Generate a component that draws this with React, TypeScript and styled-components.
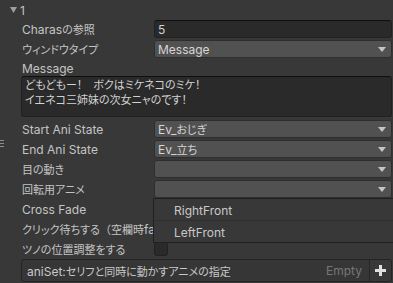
import React from "react";
import styled, { createGlobalStyle } from "styled-components";

const Global = createGlobalStyle`
  html, body { margin: 0; padding: 0; background: #383838; }
  body {
    font-family: Inter, "Noto Sans CJK JP", sans-serif;
    font-size: 12px;
    color: #c4c4c4;
  }
`;

const Page = styled.div`
  position: relative;
  width: 393px;
  height: 283px;
  overflow: hidden;
  background: #383838;
  display: flex;
  flex-direction: column;
`;

const Handle = styled.div`
  position: absolute;
  left: 0;
  top: 140px;
  width: 4px;
  height: 7px;
  display: flex;
  flex-direction: column;
  justify-content: space-between;
  & > i { display: block; height: 1px; background: #8c8c8c; }
`;

const Foldout = styled.div`
  height: 18px;
  margin-top: 1px;
  margin-bottom: -1px;
  display: flex;
  align-items: center;
  gap: 3px;
  padding-left: 10px;
  color: #c4c4c4;
`;

const Body = styled.div`
  margin-top: 2px;
  padding: 0 1px 0 21px;
  display: flex;
  flex-direction: column;
  gap: 2px;
`;

const Row = styled.div<{ $h?: number; $mb?: number }>`
  height: ${(p) => p.$h ?? 18}px;
  margin-bottom: ${(p) => p.$mb ?? 0}px;
  display: flex;
  align-items: center;
`;

const Label = styled.div<{ $full?: boolean }>`
  width: ${(p) => (p.$full ? "auto" : "133px")};
  flex: ${(p) => (p.$full ? 1 : "none")};
  padding-left: 1px;
  box-sizing: border-box;
  white-space: nowrap;
  overflow: hidden;
`;

const IntField = styled.div`
  flex: 1;
  height: 18px;
  box-sizing: border-box;
  background: #2a2a2a;
  border: 1px solid #212121;
  border-top-color: #0f0f0f;
  border-radius: 3px;
  padding-left: 3px;
  display: flex;
  align-items: center;
  color: #d2d2d2;
`;

const Popup = styled.div`
  flex: 1;
  height: 18px;
  box-sizing: border-box;
  background: #515151;
  border: 1px solid #2e2e2e;
  border-radius: 3px;
  padding: 0 5px 0 3px;
  display: flex;
  align-items: center;
  justify-content: space-between;
  color: #d6d6d6;
`;

const TextArea = styled.div`
  height: 41px;
  margin-bottom: 1px;
  box-sizing: border-box;
  background: #2a2a2a;
  border: 1px solid #212121;
  border-top-color: #0f0f0f;
  border-radius: 3px;
  padding: 0 3px;
  line-height: 15px;
  color: #d2d2d2;
  & > div { white-space: nowrap; }
`;

const Check = styled.div`
  width: 14px;
  height: 14px;
  box-sizing: border-box;
  background: #2a2a2a;
  border: 1px solid #212121;
  border-radius: 3px;
`;

const ListBar = styled.div`
  margin: 1px 1px 0 21px;
  height: 23px;
  box-sizing: border-box;
  background: #363636;
  border: 1px solid #242424;
  border-radius: 3px;
  display: flex;
  align-items: center;
`;

const BarTitle = styled.div`
  flex: 1;
  padding-left: 5px;
  white-space: nowrap;
  overflow: hidden;
  color: #c8c8c8;
`;

const Empty = styled.div`
  color: #767676;
  padding-right: 7px;
`;

const PlusButton = styled.div`
  width: 21px;
  align-self: stretch;
  border-left: 1px solid #262626;
  display: flex;
  align-items: center;
  justify-content: center;
  background: #383838;
  border-radius: 0 3px 3px 0;
`;

const Menu = styled.div`
  position: absolute;
  left: 153px;
  top: 198px;
  width: 241px;
  height: 45px;
  box-sizing: border-box;
  background: #383838;
  border: 1px solid #202020;
  display: flex;
  flex-direction: column;
  z-index: 2;
`;

const MenuItem = styled.div<{ $sep?: boolean }>`
  flex: 1;
  display: flex;
  align-items: center;
  padding-left: 20px;
  padding-top: 1px;
  color: #c8c8c8;
  border-bottom: ${(p) => (p.$sep ? "1px solid #2f2f2f" : "none")};
`;

const Jp = styled.span<{ $wide?: boolean }>`
  font-family: "Noto Sans CJK JP", sans-serif;
  font-size: 11px;
  font-feature-settings: ${(p) => (p.$wide ? "normal" : '"palt"')};
`;

const CJK = /([（]|[\u3000-\u30ff\u3400-\u9fff\uff00-\uffef]+?(?=（|[^\u3000-\u30ff\u3400-\u9fff\uff00-\uffef]|$))/;

function T({ children }: { children: string }) {
  return (
    <>
      {children.split(CJK).map((s, i) =>
        i % 2 ? (
          <Jp key={i} $wide={s === "（"}>
            {s}
          </Jp>
        ) : (
          s
        )
      )}
    </>
  );
}

const DownArrow = ({ w = 8, h = 5, c = "#c4c4c4" }: { w?: number; h?: number; c?: string }) => (
  <svg width={w} height={h} viewBox={`0 0 ${w} ${h}`}>
    <polygon points={`0,0 ${w},0 ${w / 2},${h}`} fill={c} />
  </svg>
);

const Plus = () => (
  <svg width="11" height="11" viewBox="0 0 11 11">
    <rect x="4" y="0" width="3" height="11" fill="#e0e0e0" />
    <rect x="0" y="4" width="11" height="3" fill="#e0e0e0" />
  </svg>
);

function Field({ label, children }: { label: string; children?: React.ReactNode }) {
  return (
    <Row>
      <Label>
        <T>{label}</T>
      </Label>
      {children}
    </Row>
  );
}

function Dropdown({ value }: { value?: string }) {
  return (
    <Popup>
      <span>{value ? <T>{value}</T> : null}</span>
      <DownArrow />
    </Popup>
  );
}

export default function App() {
  return (
    <>
      <Global />
      <Page>
        <Handle>
          <i />
          <i />
          <i />
        </Handle>
        <Foldout>
          <DownArrow w={7} h={6} c="#9e9e9e" />
          <span>1</span>
        </Foldout>
        <Body>
          <Field label="Charasの参照">
            <IntField>5</IntField>
          </Field>
          <Field label="ウィンドウタイプ">
            <Dropdown value="Message" />
          </Field>
          <Row $h={16} $mb={-2}>
            <Label $full>Message</Label>
          </Row>
          <TextArea>
            <div>
              <T>どもどもー！　ボクはミケネコのミケ！</T>
            </div>
            <div>
              <T>イエネコ三姉妹の次女ニャのです！</T>
            </div>
          </TextArea>
          <Field label="Start Ani State">
            <Dropdown value="Ev_おじぎ" />
          </Field>
          <Field label="End Ani State">
            <Dropdown value="Ev_立ち" />
          </Field>
          <Field label="目の動き">
            <Dropdown />
          </Field>
          <Field label="回転用アニメ">
            <Dropdown />
          </Field>
          <Field label="Cross Fade" />
          <Field label="クリック待ちする（空欄時fallback）" />
          <Field label="ツノの位置調整をする">
            <Check />
          </Field>
        </Body>
        <ListBar>
          <BarTitle>
            <T>aniSet:セリフと同時に動かすアニメの指定</T>
          </BarTitle>
          <Empty>Empty</Empty>
          <PlusButton>
            <Plus />
          </PlusButton>
        </ListBar>
        <Menu>
          <MenuItem $sep>RightFront</MenuItem>
          <MenuItem>LeftFront</MenuItem>
        </Menu>
      </Page>
    </>
  );
}
